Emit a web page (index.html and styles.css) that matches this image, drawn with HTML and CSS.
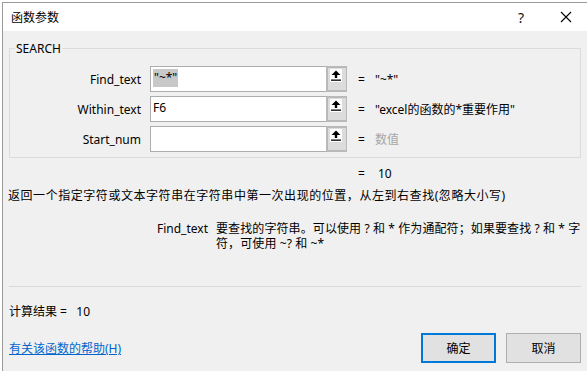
FILE: index.html
```html
<!DOCTYPE html>
<html lang="zh-CN">
<head>
  <meta charset="UTF-8" />
  <title>函数参数</title>
  <link rel="stylesheet" href="styles.css">
</head>
<body>
  <div class="dialog">
    <div class="titlebar">
      <span class="title">函数参数</span>
      <span class="help">?</span>
      <svg class="close" width="12" height="12" viewBox="0 0 12 12"><path d="M1 1 L11 11 M11 1 L1 11" stroke="#000" stroke-width="1.1" fill="none"/></svg>
    </div>

    <div class="content">
      <div class="group">
        <span class="group-title">SEARCH</span>
        <div class="args">
          <label class="arg-name">Find_text</label>
          <div class="field">
            <span class="field-text"><span class="sel">"~*"</span></span>
            <span class="ref-btn">
              <svg width="12" height="13" viewBox="0 0 12 13"><path d="M6 1.5 L10.5 6 L7.2 6 L7.2 9 L4.8 9 L4.8 6 L1.5 6 Z" fill="#000"/><rect x="1" y="10.5" width="10" height="1.3" fill="#000"/></svg>
            </span>
          </div>
          <span class="eq">=</span>
          <span class="val">"~*"</span>

          <label class="arg-name">Within_text</label>
          <div class="field">
            <span class="field-text">F6</span>
            <span class="ref-btn">
              <svg width="12" height="13" viewBox="0 0 12 13"><path d="M6 1.5 L10.5 6 L7.2 6 L7.2 9 L4.8 9 L4.8 6 L1.5 6 Z" fill="#000"/><rect x="1" y="10.5" width="10" height="1.3" fill="#000"/></svg>
            </span>
          </div>
          <span class="eq">=</span>
          <span class="val">"excel的函数的*重要作用"</span>

          <label class="arg-name">Start_num</label>
          <div class="field">
            <span class="field-text"></span>
            <span class="ref-btn">
              <svg width="12" height="13" viewBox="0 0 12 13"><path d="M6 1.5 L10.5 6 L7.2 6 L7.2 9 L4.8 9 L4.8 6 L1.5 6 Z" fill="#000"/><rect x="1" y="10.5" width="10" height="1.3" fill="#000"/></svg>
            </span>
          </div>
          <span class="eq">=</span>
          <span class="val muted">数值</span>
        </div>
      </div>

      <div class="total"><span class="eq">=</span><span>10</span></div>

      <p class="desc">返回一个指定字符或文本字符串在字符串中第一次出现的位置，从左到右查找(忽略大小写)</p>

      <div class="arg-help">
        <span class="arg-help-name">Find_text</span>
        <span class="arg-help-text">要查找的字符串。可以使用 ? 和 * 作为通配符；如果要查找 ? 和 * 字<br>符，可使用 ~? 和 ~*</span>
      </div>

      <hr class="sep">

      <div class="result">计算结果 =&nbsp;&nbsp; 10</div>

      <div class="footer">
        <a class="help-link" href="#">有关该函数的帮助(H)</a>
        <button class="btn primary">确定</button>
        <button class="btn">取消</button>
      </div>
    </div>
  </div>
</body>
</html>
```

FILE: styles.css
```css
html, body {
  margin: 0;
  height: 100%;
}
body {
  background: #fff;
  padding: 2px 0 0 2px;
  box-sizing: border-box;
  font-family: "Noto Sans", "Noto Sans CJK SC", sans-serif;
  font-size: 12px;
  color: #000;
  overflow: hidden;
}
.dialog {
  height: 100%;
  border-top: 1px solid #9a9a9a;
  border-left: 1px solid #9a9a9a;
  background: #f0f0f0;
}

.titlebar {
  height: 28px;
  background: #fff;
  display: flex;
  align-items: center;
  padding-left: 8px;
}
.title {
  flex: 1;
  font-size: 12px;
}
.help {
  font-size: 14px;
  width: 12px;
  margin-right: 30px;
  color: #111;
}
.close {
  margin-right: 15px;
}

.content {
  padding: 17px 6px 0 5px;
}

.group {
  border: 1px solid #dcdcdc;
  margin-left: 1px;
  padding: 0 0 5px 0;
}
.group-title {
  display: block;
  width: max-content;
  margin: -8px 0 0 5px;
  padding: 0 1px;
  line-height: 16px;
  background: #f0f0f0;
}
.args {
  display: grid;
  grid-template-columns: 140px 197px 28px auto;
  row-gap: 4px;
  align-items: center;
  margin-top: 9px;
}
.arg-name {
  text-align: right;
  padding-right: 9px;
}
.field {
  height: 26px;
  box-sizing: border-box;
  border: 1px solid #adadad;
  background: #fff;
  display: flex;
}
.field-text {
  flex: 1;
  padding: 2px 0 0 2px;
  line-height: 18px;
}
.sel {
  background: #c8c8c8;
  display: inline-block;
  padding: 0 1px;
}
.ref-btn {
  width: 21px;
  box-sizing: border-box;
  border: 2px solid #b9b9b9;
  border-right-width: 1px;
  margin: -1px -1px -1px 0;
  height: 26px;
  background: #dcdcdc;
  padding: 1px 0 0 2px;
}
.ref-btn svg {
  display: block;
  background: #fff;
}
.eq {
  padding-left: 11px;
}
.muted {
  color: #a6a6a6;
}

.total {
  margin: 8px 0 0 339px;
  line-height: 16px;
}
.total .eq {
  margin-right: 13px;
}

.desc {
  margin: 6px 0 0 0;
  line-height: 16px;
  letter-spacing: 0.55px;
}

.arg-help {
  display: flex;
  margin: 17px 0 0 149px;
  line-height: 15px;
}
.arg-help-name {
  width: 59px;
  flex: none;
}
.arg-help-text {
  white-space: nowrap;
  letter-spacing: 0.1px;
}

.sep {
  border: 0;
  border-top: 1px solid #d9d9d9;
  margin: 35px 0 0 1px;
}

.result {
  margin: 17px 0 0 1px;
  line-height: 16px;
}

.footer {
  display: flex;
  align-items: center;
  margin: 13px 0 0 1px;
  gap: 10px;
}
.help-link {
  flex: 1;
  color: #0066cc;
  text-decoration: underline;
}
.btn {
  width: 75px;
  height: 30px;
  box-sizing: border-box;
  background: #e1e1e1;
  border: 1px solid #adadad;
  font-family: "Noto Sans", "Noto Sans CJK SC", sans-serif;
  font-size: 12px;
  color: #000;
  padding: 0;
}
.btn.primary {
  border: 2px solid #0078d7;
}
```
